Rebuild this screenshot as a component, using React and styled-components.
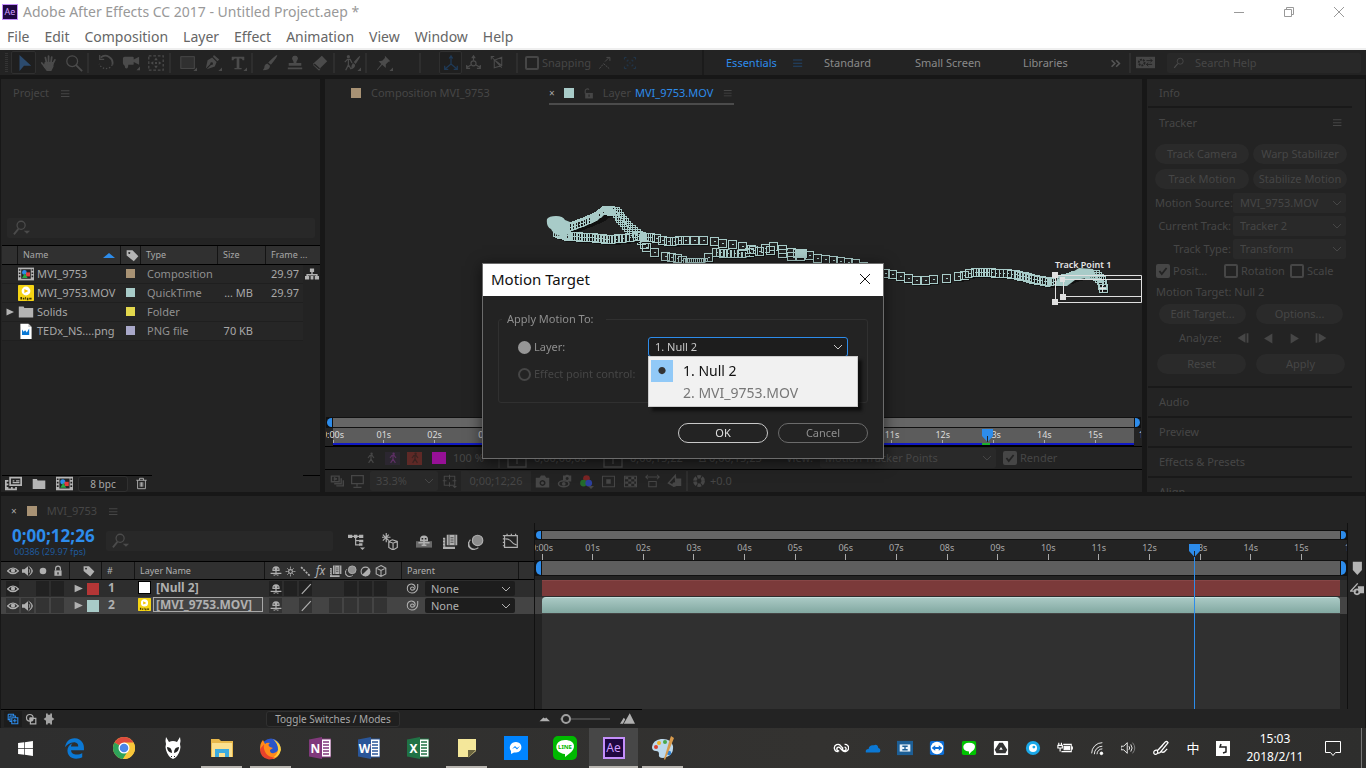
import React, { useState } from "react";
import styled, { createGlobalStyle, css } from "styled-components";
import { FaWindows, FaEdgeLegacy } from "react-icons/fa";

const GlobalStyle = createGlobalStyle`
  * { box-sizing: border-box; }
  body {
    margin: 0;
    background: #171717;
    color: #a8a8a8;
    font-family: "Noto Sans", "Noto Sans CJK TC", sans-serif;
    font-size: 11px;
    line-height: 16px;
    overflow: hidden;
  }
  button, input, select {
    font: inherit;
    color: inherit;
    margin: 0;
    padding: 0;
    border: none;
    background: none;
    outline: none;
  }
  svg { display: block; flex: none; }
`;

const FULL_SECONDS = 15.76;
const CURRENT_SECONDS = 12.87;

/* ---------- icons ---------- */

const line = { fill: "none", stroke: "currentColor", strokeWidth: 1.4 };

const icons = {
  arrow: <path d="M5 1l13 12h-8l-5 6z" />,
  hand: (
    <g stroke="currentColor" strokeWidth="2" strokeLinecap="round">
      <path d="M6 10h8v4l-2 4H8l-3-4z" />
      <path d="M2 10l4 5M6 4l1.5 7M9.5 2.500V11M13 3.500l-1 7.500M16.500 6.500L13 13" fill="none" />
    </g>
  ),
  zoom: (
    <g {...line}>
      <circle cx="8" cy="8" r="6" />
      <path d="M12 12l7 7" strokeWidth="2" />
    </g>
  ),
  rotate: (
    <g {...line}>
      <path d="M4 4a8 8 0 0 1 13 8" strokeWidth="2" />
      <path d="M17 12a8 8 0 0 1-14.500-1" strokeDasharray="1.500 2" />
      <path d="M3 1v5h5" />
    </g>
  ),
  camera: <path d="M3 3h9q1 0 1 1v2l6-3v9l-6-3v2q0 1-1 1H7q0 4-2 4t-2-3Q1 12 1 10V5q0-2 2-2zM20 14v4h-4z" />,
  anchor: (
    <g>
      <rect x="2" y="2" width="16" height="16" {...line} strokeDasharray="3 2" />
      <path d="M10 4l2 3H8zM10 16l2-3H8zM4 10l3-2v4zM16 10l-3-2v4zM9 9h2v2H9z" />
    </g>
  ),
  rect: (
    <g>
      <rect x="2" y="3" width="15" height="13" fill="#303030" stroke="currentColor" />
      <path d="M20 15v4h-4z" />
    </g>
  ),
  pen: (
    <g>
      <path d="M11 1l6 5-2 2-5-5zM9 4l5 5-2 5-9 3 5-5a1.500 1.500 0 1 0-1-1l-5 5 2-9z" />
      <path d="M20 15v4h-4z" />
    </g>
  ),
  type: <path d="M3 3h14v4h-2q0-2-2-2h-1.500v10.500H14V17H6v-1.500h2.500V5H7Q5 5 5 7H3zM20 15v4h-4z" />,
  brush: <path d="M18 1q1 1-7 11L8 9.500Q16 1 18 1zM7 10.500l3 2.500q0 5-8 5 2-2 2-5 1-2 3-2.500z" />,
  stamp: <path d="M10 2a3 3 0 0 1 2.500 5q-1 1-1 3H17v3H3v-3h5.500q0-2-1-3A3 3 0 0 1 10 2zM2 15h16v2H2z" />,
  eraser: <path d="M12 2l6 6-9 9-7-6zM4 10.500L2.500 12.500 9 18.500 10.500 16.500z" />,
  roto: (
    <g>
      <circle cx="6" cy="3" r="1.800" />
      <path d="M2 9l3-3h3l2 4M6 6v6l-3 6M6 12l3 5" {...line} />
      <path d="M19 2q1 1-5 9l-2-2q5-6 7-7zM11 10l2.500 2q0 4-5 5 1-1 1-4zM20 15v4h-4z" />
    </g>
  ),
  pin: <path d="M11 2l6 6-2 .500-3 3 0 4-4-3.500L2.500 18 2 17.500 7 11 4 8l4-.500 3-3zM20 15v4h-4z" />,
  axisLocal: (
    <g {...line}>
      <path d="M10 11V3M10 11l-7 6M10 11l7 6M8 5l2-3 2 3M3 13v4h4M17 13v4h-4" />
    </g>
  ),
  axisWorld: (
    <g {...line}>
      <circle cx="10" cy="11" r="3" />
      <path d="M10 8V3M8 5l2-3 2 3M7 13l-5 3M13 13l5 3M2 13v4h4M18 13v4h-4" />
    </g>
  ),
  axisView: (
    <g {...line}>
      <path d="M3 2l14 15M3 6V2h4M7 7l10-4v11l-10 3zM17 14L9 8" />
    </g>
  ),
  snapEdge: (
    <g {...line}>
      <path d="M2 18l6-7M8 11l8 7" strokeDasharray="3 1" />
      <path d="M10 8l5-5M12 2h5v5" />
    </g>
  ),
  snapBox: (
    <g {...line}>
      <path d="M2 5V2h3M15 2h3v3M18 15v3h-3M5 18H2v-3M6 8V6h2M12 6h2v2M14 12v2h-2M8 14H6v-2M9 10h2" />
    </g>
  ),
  burger: <path d="M3 5h13v1.500H3zM3 9.500h13v1.500H3zM3 14h13v1.500H3z" />,
  more: <path d="M4 5l5 5-5 5M11 5l5 5-5 5" {...line} strokeWidth="2.500" />,
  sync: (
    <g>
      <path d="M0 4h20v12H0z" />
      <circle cx="6" cy="10" r="3" fill="none" stroke="#232323" strokeWidth="2" strokeDasharray="2 1" />
      <path d="M11 8h6M15 6l2 2-2 2M17 12h-6M13 10l-2 2 2 2" fill="none" stroke="#232323" />
    </g>
  ),
  search: (
    <g {...line}>
      <circle cx="12" cy="7" r="5" />
      <path d="M8 11l-6 7" strokeWidth="2" />
    </g>
  ),
  searchDrop: (
    <g>
      <circle cx="9" cy="7" r="4.500" {...line} />
      <path d="M6 11l-5 6" {...line} strokeWidth="2" />
      <path d="M12 13h7l-3.500 3.500z" />
    </g>
  ),
  lock: (
    <g>
      <path d="M4 9h12v9H4z" />
      <path d="M6 9V6a4 4 0 0 1 8 0v3" {...line} strokeWidth="2" />
      <path d="M9 12h2v4H9z" fill="#232323" />
    </g>
  ),
  unlock: (
    <g>
      <path d="M4 9h14v10H4z" />
      <path d="M4 10V5a4 4 0 0 1 7-2" {...line} strokeWidth="2" />
      <path d="M10 12h2v4h-2z" fill="#232323" />
    </g>
  ),
  tag: <path fillRule="evenodd" d="M1 2h9l9 9-7 8-11-9zM5 4.500a1.500 1.500 0 1 0 .1 0z" />,
  comp: (
    <g>
      <path fill="#b4b4b4" d="M0 2h20v16H0z" />
      <path fill="#232323" d="M1 4h2v2H1zM1 8h2v2H1zM1 12h2v2H1zM17 4h2v2h-2zM17 8h2v2h-2zM17 12h2v2h-2zM4 4h12v12H4z" />
      <circle cx="8" cy="8" r="3" fill="#2d8ceb" />
      <path fill="#e23b3b" d="M10 8h5v5h-5z" />
      <path fill="#27a844" d="M8.500 9l3.500 6H5z" />
    </g>
  ),
  player: (
    <g>
      <rect width="20" height="20" rx="1" fill="#f5d414" />
      <circle cx="10" cy="7.500" r="5.500" fill="#fff" />
      <path d="M8 5l5 2.500L8 10z" fill="#f5c400" />
      <path d="M3 15h2v3H3zM6 16h2v2H6zM9 15h1v3H9zM11 16h2v3h-2zM14 16h3v2h-3z" fill="#403600" />
    </g>
  ),
  folder: <path fill="#b4b4b4" d="M1 3h6l1 2h11v12H1z" />,
  png: (
    <g>
      <path d="M3 1h10l4 4v15H3z" fill="#fff" />
      <path d="M5 15V8l2 3 2-2 2 3 3-5v8z" fill="#0a78d4" />
      <path d="M13 1v4h4z" fill="#c4c4c4" />
    </g>
  ),
  flow: <path d="M7 2h6v5h-2v3h7v3h2v5h-6v-5h2v-1H4v1h2v5H0v-5h2v-3h7V7H7zM8 13h4v5H8z" />,
  interpret: (
    <g>
      <path d="M6 3h13v9H6z" fill="none" stroke="#b4b4b4" strokeWidth="2" />
      <path d="M9 7h2M13 7h4M9 9h8" stroke="#b4b4b4" strokeWidth="1.500" />
      <path d="M0 6h4v2H2v2h2v2H2v2h2v2h3v-2h2v2h3v-2h2v4H0z" fill="#b4b4b4" />
    </g>
  ),
  trash: (
    <g {...line}>
      <path d="M2 5h16M7 5V2h6v3M4 5v13h12V5M8 8v7M10 8v7M12 8v7" />
    </g>
  ),
  person: (
    <g>
      <circle cx="11" cy="3" r="2" />
      <path d="M5 10l3-4h4l3 4M10 6v6l-4 6M10 12l4 6" {...line} strokeWidth="2" />
    </g>
  ),
  bracket: <path d="M1 1h18v18H1zM7 6h6M10 6v10" {...line} />,
  layers: (
    <g {...line}>
      <path d="M2 3h11v8H2z" strokeWidth="2" />
      <path d="M6 5l4 2-4 2z" fill="currentColor" />
      <path d="M16 6v8H6M19 9v8H9" strokeWidth="2" />
    </g>
  ),
  monitor: <path d="M4 4h13v9H4zM10 13v3M6 17h9" {...line} />,
  grid: (
    <g>
      <path d="M3 3h14v12H3zM10 1v6M10 11v6M1 9h5M14 9h5" {...line} />
      <path d="M14 16h6l-3 3z" />
    </g>
  ),
  snapshot: <path fillRule="evenodd" d="M1 5h5l2-3h5l2 3h4v13H1zM10 8a4 4 0 1 0 .1 0zM10 10a2 2 0 1 1-.1 0z" />,
  showSnap: (
    <g>
      <ellipse cx="9" cy="13" rx="7" ry="4" {...line} strokeWidth="2" />
      <circle cx="9" cy="13" r="2.500" />
      <path fillRule="evenodd" d="M8 2h3l1-1h3l1 1h3v8h-5l-3-2H8zM13.500 4a2 2 0 1 0 .1 0z" />
    </g>
  ),
  rgb: (
    <g>
      <circle cx="10" cy="6" r="4.500" fill="#7a2424" />
      <circle cx="6" cy="12" r="4.500" fill="#236b2c" />
      <circle cx="13" cy="12" r="4.500" fill="#2c3f9c" />
      <path d="M12 16h8l-4 4z" />
    </g>
  ),
  roi: (
    <g>
      <path d="M2 3h16v14H2z" {...line} />
      <path d="M7 7h6v6H7z" />
    </g>
  ),
  checker: (
    <g>
      <path d="M2 3h16v14H2z" {...line} />
      <path d="M3 4h4v3H3zM11 4h4v3h-4zM7 7h4v3H7zM15 7h3v3h-3zM3 10h4v3H3zM11 10h4v3h-4zM7 13h4v3H7zM15 13h3v3h-3z" />
    </g>
  ),
  aspect: <path d="M1 4h18M4 1L1 4l3 3M16 1l3 3-3 3M5 10h10v7H5z" {...line} />,
  shapes: (
    <g>
      <path d="M11 2L2 12l7 4 3-2z" {...line} strokeWidth="2" />
      <path d="M12 6h7v10h-8z" />
      <circle cx="10" cy="14" r="3" />
    </g>
  ),
  aperture: (
    <g {...line}>
      <circle cx="10" cy="10" r="6" strokeWidth="5" strokeDasharray="5 1.300" />
    </g>
  ),
  chevron: <path d="M2 6l8 8 8-8" {...line} strokeWidth="2" />,
  stepBack: <path d="M14 2v16L1 10zM16 2h3v16h-3z" />,
  playBack: <path d="M17 1v18L2 10z" />,
  play: <path d="M3 1v18l15-9z" />,
  stepFwd: <path d="M6 2v16l13-8zM1 2h3v16H1z" />,
  check: <path d="M4 10l4 5 8-10" {...line} strokeWidth="3" />,
  flowDrop: (
    <g>
      <path d="M4 4h11M9 4v10h5M9 9h4" {...line} />
      <path d="M0 2h5v4H0zM7 2h4v4H7zM13 2h5v4h-5zM13 8h5v3h-5zM13 12h4v3h-4zM14 17h6l-3 3z" />
    </g>
  ),
  draft3d: (
    <g {...line}>
      <path d="M12 8l6 2v7l-5 3-5-3v-7zM8 10l5 2 5-2M13 12v7" />
      <path d="M5 0v11M0 5h10M1 2l7 7M8 2l-7 7" />
    </g>
  ),
  shy: (
    <g>
      <path d="M10 2a6 6 0 0 1 6 6v2H4V8a6 6 0 0 1 6-6z" />
      <path d="M1 13h18v2H1zM9 8h2v9H9zM6 16h2v2H6zM12 16h2v2h-2z" />
      <path d="M6 6h2v2H6zM12 6h2v2h-2z" fill="#303030" />
    </g>
  ),
  shyBig: (
    <g>
      <path d="M0 9h20v8H0z" opacity=".5" />
      <path d="M10 2a5 5 0 0 1 5 5v2H5V7a5 5 0 0 1 5-5z" />
      <path d="M3 11h14M10 5v10M7 14h2M11 14h2" {...line} strokeWidth="2" />
      <path d="M7 5h2v2H7zM11 5h2v2h-2z" fill="#232323" />
    </g>
  ),
  film: (
    <g>
      <path d="M5 1h14v14H5zM0 5h3v12h13v3H0z" />
      <path d="M8 1v14M16 1v14M10 5h4M10 8h4M10 11h4M0 8h2M0 12h2M0 16h2" stroke="#303030" />
    </g>
  ),
  blur: (
    <g>
      <circle cx="12" cy="8" r="6.500" opacity=".75" />
      <circle cx="12" cy="8" r="6.500" {...line} />
      <path d="M3 7a6.500 6.500 0 0 0 10 10M1 10a6.500 6.500 0 0 0 8 9" {...line} />
    </g>
  ),
  graph: (
    <g {...line}>
      <path d="M3 3h15v14H3zM1 3h2M1 7h2M1 11h2M1 15h2M6 1v2M11 1v2M16 1v2M4 7q5 0 7 3t6 4" />
    </g>
  ),
  eye: (
    <g>
      <path d="M1 10q9-10 18 0-9 9-18 0z" {...line} strokeWidth="2" />
      <circle cx="10" cy="9.500" r="3.500" />
    </g>
  ),
  speaker: (
    <g>
      <path d="M0 7h4l6-5v16l-6-5H0z" />
      <path d="M12 7q2 3 0 6M14 4q5 6 0 12M11 2q13 8 0 16" {...line} />
    </g>
  ),
  dot: <circle cx="10" cy="10" r="5.500" />,
  sun: (
    <g {...line}>
      <circle cx="10" cy="10" r="3.500" strokeWidth="2" />
      <path d="M10 1v4M10 15v4M1 10h4M15 10h4M4 4l3 3M13 13l3 3M4 16l3-3M13 7l3-3" />
    </g>
  ),
  quality: <path d="M2 2l16 16" {...line} strokeWidth="3" strokeDasharray="4 2" />,
  slash: <path d="M3 18L18 2" {...line} strokeWidth="2" />,
  adjust: (
    <g>
      <circle cx="10" cy="10" r="8" {...line} strokeWidth="2" />
      <path d="M16 4a8 8 0 0 1-12 12z" />
    </g>
  ),
  cube: <path d="M10 1l8 4v10l-8 4-8-4V5zM2 5l8 4 8-4M10 9v10" {...line} strokeWidth="1.800" />,
  whip: (
    <path d="M12 10a2.500 2.500 0 1 0-3 2.500 5 5 0 0 0 5-5 6 6 0 0 0-6-4.500 7 7 0 0 0-6 7 7 7 0 0 0 7 7 9 9 0 0 0 9-9V3" {...line} strokeWidth="1.600" />
  ),
  tri: <path d="M3 3l15 7-15 7z" />,
  marker: <path d="M4 1h13v12l-6.500 7L4 13z" />,
  compBtn: (
    <g>
      <path d="M11 2L1 13h8" {...line} strokeWidth="2" />
      <path d="M11 6h9v10h-7z" />
      <circle cx="10" cy="14" r="3.500" {...line} strokeWidth="2.500" />
    </g>
  ),
  stack: (
    <g {...line}>
      <path d="M2 2h9v3M2 2v9h3M5 5h9v3M5 5v9h3M8 8h10v10H8zM13 10v6M10 13h6" strokeWidth="1.800" />
    </g>
  ),
  modes: (
    <g {...line}>
      <circle cx="8" cy="8" r="5.500" strokeWidth="2" />
      <path d="M9 9h9v9H9z" strokeWidth="2" />
      <path d="M8 8h5v5H8z" fill="currentColor" />
    </g>
  ),
  inout: <path d="M5 1h3v2h4V1h3v6l4 3-4 3v6h-3v-2H8v2H5v-6l-4-3 4-3z" opacity=".9" />,
  hillSmall: <path d="M1 15l7-7 3 2 2-2 7 7z" />,
  hillBig: <path d="M0 17l5-8 2 2-3 6zM5 17L13 3l7 14z" />,
};

function Icon({ name, size = 16, color, label }) {
  return (
    <svg width={size} height={size} viewBox="0 0 20 20" fill="currentColor" color={color} aria-label={label}>
      {icons[name]}
    </svg>
  );
}

/* ---------- shared parts ---------- */

const Swatch = styled.span`
  display: inline-block;
  flex: none;
  width: ${(p) => p.$size || 10}px;
  height: ${(p) => p.$size || 10}px;
  background: ${(p) => p.$color};
`;

const Panel = styled.section`
  background: #232323;
  display: flex;
  flex-direction: column;
  min-width: 0;
  min-height: 0;
  overflow: hidden;
`;

const TabBar = styled.div`
  height: 28px;
  flex: none;
  display: flex;
  align-items: center;
  padding-left: 12px;
  gap: 10px;
  color: #464646;
  button { display: flex; align-items: center; }
`;

const Pill = styled.button`
  height: 20px;
  border-radius: 10px;
  background: #2a2a2a;
  color: #464646;
  white-space: nowrap;
`;

const SelectWrap = styled.span`
  display: grid;
  align-items: center;
  position: relative;
  flex: none;
  height: 20px;
  width: ${(p) => (p.$w ? p.$w + "px" : "auto")};
  border-radius: 2px;
  background: ${(p) => p.$bg || "#292929"};
  color: ${(p) => p.$color || "#464646"};
  ${(p) => p.$focus && css`border: 1px solid #2d8ceb; border-radius: 3px;`}
  select {
    grid-area: 1 / 1;
    appearance: none;
    width: 100%;
    padding-left: ${(p) => p.$pad || 7}px;
  }
  > svg {
    grid-area: 1 / 1;
    justify-self: end;
    margin-right: 4px;
    pointer-events: none;
  }
`;

function Select({ label, options, children, ...rest }) {
  return (
    <SelectWrap {...rest}>
      <select aria-label={label}>
        {options.map((o) => (
          <option key={o}>{o}</option>
        ))}
      </select>
      <Icon name="chevron" size={10} />
      {children}
    </SelectWrap>
  );
}

const CheckLabel = styled.label`
  display: flex;
  align-items: center;
  gap: 3px;
  color: #464646;
  > span { display: grid; color: #232323; }
  input {
    grid-area: 1 / 1;
    appearance: none;
    width: 14px;
    height: 14px;
    border: 2px solid #464646;
    border-radius: 2px;
  }
  input:checked { background: #464646; }
  svg { grid-area: 1 / 1; align-self: center; justify-self: center; pointer-events: none; }
`;

function Check({ children, checked }) {
  const [on, setOn] = useState(!!checked);
  return (
    <CheckLabel>
      <span>
        <input type="checkbox" checked={on} onChange={() => setOn(!on)} />
        {on && <Icon name="check" size={12} />}
      </span>
      {children}
    </CheckLabel>
  );
}

/* ---------- window chrome ---------- */

const Window = styled.div`
  height: 100vh;
  min-height: 700px;
  display: flex;
  flex-direction: column;
`;

const TitleBar = styled.header`
  height: 24px;
  flex: none;
  background: #fff;
  color: #999;
  font-size: 14px;
  display: flex;
  align-items: center;
  padding-left: 2px;
  gap: 5px;
  h1 { margin: 0; font: inherit; flex: 1; }
`;

const AeBadge = styled.span`
  width: ${(p) => p.$size}px;
  height: ${(p) => p.$size}px;
  flex: none;
  display: grid;
  place-items: center;
  background: #1f0740;
  border: ${(p) => (p.$size > 18 ? 2 : 1)}px solid #c48ffb;
  color: #cf9cff;
  font-size: ${(p) => (p.$size > 18 ? 12 : 9)}px;
  line-height: 12px;
`;

const WinButtons = styled.div`
  display: flex;
  padding-right: 2px;
  button { width: 50px; height: 22px; display: grid; place-items: center; }
`;

const MenuBar = styled.nav`
  height: 26px;
  flex: none;
  background: #fff;
  border-bottom: 2px solid #efefef;
  color: #666;
  display: flex;
  align-items: center;
  padding: 2px 0 0 7px;
  gap: 15px;
  font-size: 14px;
`;

function WindowChrome() {
  return (
    <>
      <TitleBar>
        <AeBadge $size={16}>Ae</AeBadge>
        <h1>Adobe After Effects CC 2017 - Untitled Project.aep *</h1>
        <WinButtons>
          <button aria-label="Minimize">
            <svg width="10" height="10"><path d="M0 5.500h10" stroke="#999" /></svg>
          </button>
          <button aria-label="Restore">
            <svg width="10" height="10" fill="none" stroke="#999"><path d="M.5 2.500h7v7h-7zM2.500 2.500v-2h7v7h-2" /></svg>
          </button>
          <button aria-label="Close">
            <svg width="10" height="10" stroke="#999"><path d="M0 0l10 10M10 0L0 10" /></svg>
          </button>
        </WinButtons>
      </TitleBar>
      <MenuBar>
        {["File", "Edit", "Composition", "Layer", "Effect", "Animation", "View", "Window", "Help"].map((m) => (
          <button key={m}>{m}</button>
        ))}
      </MenuBar>
    </>
  );
}

/* ---------- toolbar ---------- */

const ToolBar = styled.div`
  height: 25px;
  flex: none;
  background: #232323;
  color: #4b4b4b;
  display: flex;
  align-items: center;
  padding-right: 5px;
  margin-bottom: 4px;
`;

const Grip = styled.span`
  width: 3px;
  height: 20px;
  margin: 0 3px 0 5px;
  background: repeating-linear-gradient(#343434 0 1px, #232323 1px 2px);
`;

const Tool = styled.button`
  width: ${(p) => p.$w || 25}px;
  height: 23px;
  flex: none;
  display: grid;
  place-items: center;
  border-radius: 2px;
  color: ${(p) => p.$color || "inherit"};
  ${(p) => p.$active && css`border: 1px solid #2f2f2f; background: #1f1f1f;`}
`;

const Sep = styled.span`
  width: 2px;
  height: 20px;
  flex: none;
  background: #2e2e2e;
  margin: ${(p) => p.$margin || "0 4px 0 1px"};
`;

const Workspaces = styled.div`
  margin-left: auto;
  height: 25px;
  border-left: 2px solid #1b1b1b;
  padding-left: 22px;
  display: flex;
  align-items: center;
`;

const WorkspaceButton = styled.button`
  width: ${(p) => p.$w}px;
  padding-top: 1px;
  text-align: left;
  white-space: nowrap;
  color: ${(p) => (p.$active ? "#2d8ceb" : "#8a8a8a")};
`;

const SearchBox = styled.label`
  height: 20px;
  flex: none;
  width: ${(p) => (p.$w ? p.$w + "px" : "auto")};
  margin: ${(p) => p.$margin || "0"};
  display: flex;
  align-items: center;
  gap: 10px;
  padding-left: 6px;
  border-radius: 2px;
  background: #282828;
  color: #4b4b4b;
  input { flex: 1; min-width: 0; }
  input::placeholder { color: #464646; opacity: 1; }
`;

const toolGroups = [
  ["arrow", "hand", "zoom"],
  ["rotate", "camera", "anchor"],
  ["rect", "pen", "type"],
  ["brush", "stamp", "eraser"],
  ["roto"],
  ["pin"],
];

function Tools() {
  return (
    <ToolBar>
      <Grip />
      {toolGroups.map((group, i) => (
        <React.Fragment key={i}>
          {i > 0 && <Sep />}
          {group.map((name) => (
            <Tool key={name} aria-label={name} $active={name === "arrow"} $color={name === "arrow" && "#2c4b6e"}>
              <Icon name={name} size={18} />
            </Tool>
          ))}
        </React.Fragment>
      ))}
      <Sep $margin="0 18px 0 23px" />
      <Tool $w={23} $active $color="#1f3a57" aria-label="Local axis"><Icon name="axisLocal" size={18} /></Tool>
      <Tool $w={23} aria-label="World axis"><Icon name="axisWorld" size={17} /></Tool>
      <Tool $w={23} aria-label="View axis"><Icon name="axisView" size={15} /></Tool>
      <Sep $margin="0 7px 0 8px" />
      <Check>Snapping</Check>
      <Tool $w={28} aria-label="Snap edges"><Icon name="snapEdge" size={14} /></Tool>
      <Tool $w={22} $color="#22384f" aria-label="Snap box"><Icon name="snapBox" size={14} /></Tool>
      <Workspaces>
        <WorkspaceButton $w={65} $active>Essentials</WorkspaceButton>
        <WorkspaceButton $w={33} aria-label="Workspace menu"><Icon name="burger" size={14} color="#22456b" /></WorkspaceButton>
        <WorkspaceButton $w={91}>Standard</WorkspaceButton>
        <WorkspaceButton $w={108}>Small Screen</WorkspaceButton>
        <WorkspaceButton $w={86}>Libraries</WorkspaceButton>
        <WorkspaceButton $w={20} aria-label="More workspaces"><Icon name="more" size={13} color="#555" /></WorkspaceButton>
        <Sep $margin="0 5px 0 0" />
        <Icon name="sync" size={19} color="#464646" />
        <SearchBox $w={194} $margin="0 0 0 12px">
          <Icon name="search" size={12} />
          <input placeholder="Search Help" aria-label="Search Help" />
        </SearchBox>
      </Workspaces>
    </ToolBar>
  );
}

/* ---------- project panel ---------- */

const Workspace = styled.main`
  flex: 1;
  min-height: 0;
  display: grid;
  grid-template-columns: 319px minmax(0, 1fr) 218px;
  grid-template-rows: minmax(0, 1fr);
  gap: 5px;
  padding: 0 1px;
`;

const ProjectSpace = styled.div`
  height: 111px;
  flex: none;
`;

const ProjectTable = styled.table`
  margin: 7px 0 0 1px;
  border-collapse: collapse;
  table-layout: fixed;
  width: 318px;
  th {
    height: 19px;
    background: #303030;
    border-top: 1px solid #000;
    border-bottom: 1px solid #000;
    padding: 0 0 0 6px;
    font-size: 9px;
    font-weight: normal;
    line-height: 12px;
    text-align: left;
    white-space: nowrap;
    box-shadow: inset 1px 0 #141414;
  }
  th:first-child { box-shadow: none; }
  td {
    height: 19px;
    padding: 0;
    white-space: nowrap;
    border-bottom: 1px solid #1f1f1f;
    background: #262626;
  }
  td:last-child { background: none; border: none; }
  td > svg { margin: auto; }
`;

const NameHead = styled.span`
  display: flex;
  justify-content: space-between;
  align-items: center;
  padding-right: 5px;
`;

const NameCell = styled.span`
  display: flex;
  align-items: center;
  gap: 3px;
  padding-left: 1px;
`;

const TypeText = styled.span`
  padding-left: 7px;
  color: #909090;
`;

const Right = styled.span`
  display: block;
  text-align: right;
  padding-right: ${(p) => p.$pad}px;
`;

const ProjectFooter = styled.div`
  margin: auto 0 0 1px;
  height: 17px;
  flex: none;
  display: flex;
  align-items: center;
  gap: 10px;
  padding-left: 3px;
  color: #b4b4b4;
  background: linear-gradient(#000, #000) 0 0 / 150px 1px no-repeat, linear-gradient(#000, #000) 100% 0 / 17px 1px no-repeat;
`;

const BpcButton = styled.button`
  width: 50px;
  height: 16px;
  margin: 1px -3px 0 -5px;
  border: 1px solid #303030;
  border-radius: 3px;
  background: #1f1f1f;
  font-size: 10px;
  line-height: 12px;
  color: #a8a8a8;
`;

const files = [
  { name: "MVI_9753", icon: "comp", color: "#a89274", type: "Composition", size: "", rate: "29.97", flow: true },
  { name: "MVI_9753.MOV", icon: "player", color: "#a8cbc8", type: "QuickTime", size: "... MB", rate: "29.97" },
  { name: "Solids", icon: "folder", color: "#e3d84d", type: "Folder", size: "", rate: "", folder: true },
  { name: "TEDx_NS....png", icon: "png", color: "#a9a8c9", type: "PNG file", size: "70 KB", rate: "" },
];

function Project() {
  return (
    <Panel>
      <TabBar>
        Project
        <button aria-label="Project menu"><Icon name="burger" size={13} /></button>
      </TabBar>
      <ProjectSpace />
      <SearchBox $margin="0 5px 0 6px">
        <Icon name="searchDrop" size={18} />
        <input aria-label="Search project" />
      </SearchBox>
      <ProjectTable>
        <colgroup>
          {[15, 103, 20, 77, 48, 38, 17].map((w, i) => (
            <col key={i} width={w} />
          ))}
        </colgroup>
        <thead>
          <tr>
            <th />
            <th>
              <NameHead>
                Name
                <svg width="12" height="5" fill="#2d8ceb"><path d="M6 0l6 5H0z" /></svg>
              </NameHead>
            </th>
            <th><Icon name="tag" size={13} color="#b4b4b4" label="Label" /></th>
            <th>Type</th>
            <th>Size</th>
            <th colSpan={2}>Frame ...</th>
          </tr>
        </thead>
        <tbody>
          {files.map((f) => (
            <tr key={f.name}>
              <td>{f.folder && <Icon name="tri" size={10} color="#b4b4b4" />}</td>
              <td>
                <NameCell>
                  <Icon name={f.icon} size={16} />
                  {f.name}
                </NameCell>
              </td>
              <td align="center"><Swatch $size={9} $color={f.color} /></td>
              <td><TypeText>{f.type}</TypeText></td>
              <td><Right $pad={12}>{f.size}</Right></td>
              <td><Right $pad={4}>{f.rate}</Right></td>
              <td>{f.flow && <Icon name="flow" size={14} color="#b4b4b4" />}</td>
            </tr>
          ))}
        </tbody>
      </ProjectTable>
      <ProjectFooter>
        <Icon name="interpret" size={17} />
        <Icon name="folder" size={14} />
        <Icon name="comp" size={17} />
        <BpcButton>8 bpc</BpcButton>
        <Icon name="trash" size={13} />
      </ProjectFooter>
    </Panel>
  );
}

/* ---------- time ruler ---------- */

const RulerClip = styled.div`
  height: ${(p) => p.$h}px;
  flex: none;
  overflow: hidden;
  padding: 0 7px;
  color: ${(p) => (p.$lit ? "#ddd" : "#a8a8a8")};
  background: ${(p) => (p.$lit ? "linear-gradient(90deg, #232323 7px, #5c5c5c 7px, #5c5c5c calc(100% - 7px), #232323 0)" : "none")};
  ul {
    width: 100%;
    height: 100%;
    margin: 0 0 0 ${-50 / FULL_SECONDS}%;
    padding: 0;
    display: flex;
    list-style: none;
    font-size: 9px;
    line-height: ${(p) => (p.$lit ? 13 : 16)}px;
  }
  li {
    flex: 0 0 ${100 / FULL_SECONDS}%;
    text-align: center;
    background: linear-gradient(#aaa, #aaa) 50% 100% / 1px ${(p) => (p.$lit ? 3 : 6)}px no-repeat;
  }
`;

function Ruler({ h, lit }) {
  return (
    <RulerClip $h={h} $lit={lit}>
      <ul>
        {Array.from({ length: 17 }, (_, i) => (
          <li key={i}>{i === 0 ? "0:00s" : String(i).padStart(2, "0") + "s"}</li>
        ))}
      </ul>
    </RulerClip>
  );
}

const RangeBar = styled.div`
  height: ${(p) => p.$h}px;
  flex: none;
  display: flex;
  background: #111;
  &::before, &::after {
    content: "";
    width: 5px;
    margin: 1px;
    background: #2d8ceb;
    border-radius: 5px 0 0 5px;
  }
  &::after { border-radius: 0 5px 5px 0; }
  span { flex: 1; background: #666; border: solid #111; border-width: 1px 0; }
`;

const Timed = styled.div`
  position: relative;
  display: flex;
  flex-direction: column;
  margin: ${(p) => p.$margin || "0"};
`;

/* cursor drawn over the ruler and tracks */
const Playhead = styled.div`
  position: absolute;
  top: ${(p) => p.$top}px;
  bottom: 0;
  width: 1px;
  background: ${(p) => (p.$line ? "#2d8ceb" : "none")};
  svg { margin-left: -5px; }
`;

function Cursor({ top, line }) {
  const left = `calc(7px + (100% - 14px) * ${CURRENT_SECONDS / FULL_SECONDS})`;
  return (
    <Playhead $top={top} $line={line} style={{ left }}>
      <svg width="11" height="13"><path d="M0 0h11v7l-5.500 6L0 7z" fill="#2d8ceb" /><path d="M5 7h1v6H5z" fill="#222" /></svg>
    </Playhead>
  );
}

/* ---------- layer viewer ---------- */

const ViewerTabs = styled(TabBar)`
  padding-left: 26px;
  white-space: nowrap;
`;

const ActiveTab = styled.div`
  margin-left: 49px;
  height: 24px;
  align-self: flex-start;
  padding-top: 2px;
  margin-top: 2px;
  border-bottom: 2px solid #4b4b4b;
  display: flex;
  align-items: center;
  gap: 9px;
  b { color: #2d8ceb; font-weight: normal; margin-left: -5px; }
`;

const CloseX = styled.button`
  color: #a8a8a8;
  font-size: 10px;
  line-height: 12px;
`;

const Canvas = styled.svg`
  flex: 1;
  width: 100%;
  min-height: 0;
`;

const ViewRow = styled.div`
  height: 23px;
  flex: none;
  border-top: 1px solid #000;
  display: flex;
  align-items: center;
  white-space: nowrap;
  color: #464646;
  overflow: hidden;
  padding-left: ${(p) => p.$pad}px;
  gap: ${(p) => p.$gap}px;
`;

const ViewIcons = styled.div`
  display: flex;
  gap: 7px;
`;

const IconBox = styled.span`
  width: 15px;
  height: 13px;
  display: grid;
  place-items: center;
  background: ${(p) => p.$bg};
`;

const MaskColor = styled(Swatch)`
  height: 12px;
  margin-left: 3px;
`;

const TimeButton = styled.button`
  width: ${(p) => p.$w}px;
  height: 20px;
  background: ${(p) => p.$bg || "none"};
  text-align: ${(p) => (p.$bg ? "center" : "left")};
`;

const BlueLine = styled.div`
  height: 3px;
  margin: 0 7px;
  border: solid #000;
  border-width: 0 0 1px;
  background: linear-gradient(90deg, #1018c4 81%, #18b030 81%, #18b030 82%, #1018c4 82%);
`;

// motion paths: [x, y] corners with the number of samples on the way to the next one
const paths = [
  [[232, 117, 5], [245, 120, 6], [262, 114, 6], [275, 108, 5], [281, 103, 5], [290, 104, 4], [297, 113, 3], [303, 120, 3], [311, 126, 3], [316, 133, 2], [321, 140, 1], [329, 145, 1], [340, 149, 2], [352, 151, 2], [362, 155, 8], [378, 155, 1], [383, 150, 1], [391, 145, 4], [405, 146, 4], [420, 146, 2], [428, 143, 1], [440, 141, 1], [448, 139, 1], [457, 142, 1], [466, 145, 2], [477, 146, 1]],
  [[232, 125, 5], [243, 129, 9], [265, 130, 6], [283, 132, 5], [300, 131, 3], [312, 129, 6], [325, 130, 3], [343, 134, 3], [360, 133, 2], [378, 133, 1], [389, 134, 1], [397, 136, 1], [407, 137, 1], [417, 139, 2], [434, 144, 1], [445, 143, 1], [457, 146, 1], [466, 149, 2], [484, 148, 1], [492, 151, 2], [508, 153, 3], [530, 156, 4], [560, 166, 1], [567, 167, 3], [591, 173, 2], [608, 172, 2], [633, 169, 3], [650, 165, 5], [662, 165, 7], [690, 167, 5], [705, 171, 7], [724, 175, 7], [738, 172, 8], [757, 166, 4], [770, 167, 3], [776, 173, 3], [778, 181, 1]],
];

function samplePath(corners) {
  const out = [];
  corners.forEach(([x, y, n], i) => {
    const [nx, ny] = corners[i + 1] || [x, y];
    for (let k = 0; k < n; k++) {
      out.push([Math.round(x + ((nx - x) * k) / n), Math.round(y + ((ny - y) * k) / n)]);
    }
  });
  return out;
}

function MotionPath() {
  const teal = "#a8cbc8";
  return (
    <Canvas>
      {paths.map((corners, i) => (
        <g key={i}>
          {samplePath(corners).map(([x, y], k) => (
            <g key={k}>
              <path d={`M${x - 2.5} ${y + 5.5}h8v-8`} stroke="#111" fill="none" />
              <rect x={x - 3.5} y={y - 3.5} width="8" height="8" stroke={teal} fill="none" />
              <rect x={x} y={y} width="2" height="1" fill={teal} />
            </g>
          ))}
        </g>
      ))}
      <path fill={teal} d="M222 112q2-3 9-3 7 0 9 4l5 2v12l-10 2q-7-2-9-7-5-2-4-10zM471 142h10v9h-10zM732 172l14-6 8-5 14 1 4 8-10 1-12 2-8 6h-12z" />
      <path fill="none" stroke="#e0e0e0" d="M816.500 168.500h-86v27h86zM816.500 172.500h-78v17h78z" />
      <path fill="#e0e0e0" d="M727 165h6v6h-6zM727 192h6v6h-6zM735 187h6v6h-6zM735 170h5v5h-5zM774 181h7v1h-7zM777 178h1v7h-1z" />
      <text x="730" y="161" fill="#e6e6e6" fontSize="9" fontWeight="600">Track Point 1</text>
    </Canvas>
  );
}

function Viewer() {
  return (
    <Panel>
      <ViewerTabs>
        <Swatch $color="#a89274" />
        <span>Composition MVI_9753</span>
        <ActiveTab>
          <CloseX aria-label="Close tab">×</CloseX>
          <Swatch $color="#a8cbc8" />
          <Icon name="unlock" size={11} />
          Layer
          <b>MVI_9753.MOV</b>
          <Icon name="burger" size={12} />
        </ActiveTab>
      </ViewerTabs>
      <MotionPath />
      <Timed $margin="0 1px">
        <RangeBar $h={11}><span /></RangeBar>
        <Ruler h={15} lit />
        <BlueLine />
        <Cursor top={12} />
      </Timed>
      <ViewRow $pad={38} $gap={7}>
        <IconBox><Icon name="person" size={12} /></IconBox>
        <IconBox $bg="#2b2630"><Icon name="person" size={12} color="#5d2f63" /></IconBox>
        <IconBox $bg="#5e2926"><Icon name="person" size={12} color="#3a2320" /></IconBox>
        <MaskColor $size={14} $color="#961096" />
        <TimeButton $w={38}>100 %</TimeButton>
        <Sep $margin="0" />
        <Icon name="bracket" size={20} />
        <TimeButton $w={62}>0;00;00;00</TimeButton>
        <Icon name="bracket" size={20} />
        <TimeButton $w={62}>0;00;15;22</TimeButton>
        <TimeButton $w={80}>Δ 0;00;15;23</TimeButton>
        <span>View:</span>
        <Select label="View" options={["Motion Tracker Points"]} $w={176} $pad={5} />
        <Check checked>Render</Check>
      </ViewRow>
      <ViewRow $pad={5} $gap={4}>
        <Icon name="layers" size={14} />
        <Icon name="monitor" size={18} />
        <Select label="Zoom" options={["33.3%"]} $w={68} $pad={6} />
        <Icon name="grid" size={15} />
        <TimeButton $w={70} $bg="#292929">0;00;12;26</TimeButton>
        <ViewIcons>
          {["snapshot", "showSnap", "rgb", "roi", "checker", "aspect", "shapes"].map((n) => (
            <Icon key={n} name={n} size={15} />
          ))}
        </ViewIcons>
        <Sep $margin="0" />
        <Icon name="aperture" size={14} />
        <span>+0.0</span>
      </ViewRow>
    </Panel>
  );
}

/* ---------- right column ---------- */

const SideTitle = styled.div`
  height: ${(p) => p.$h || 30}px;
  flex: none;
  margin: 0 13px 0 1px;
  padding: 0 8px 0 11px;
  display: flex;
  align-items: center;
  justify-content: space-between;
  color: #464646;
  border-bottom: ${(p) => (p.$open ? 0 : 2)}px solid #191919;
`;

const TrackerForm = styled.div`
  flex: none;
  display: flex;
  flex-direction: column;
  margin: 0 13px 0 1px;
  padding: 7px 5px 12px 7px;
  border-bottom: 2px solid #191919;
  color: #464646;
`;

const ButtonPair = styled.div`
  display: grid;
  grid-template-columns: 1fr 1fr;
  gap: ${(p) => (p.$inset ? 10 : 4)}px;
  margin: ${(p) => p.$margin || "0 0 5px"};
`;

const Field = styled.label`
  display: grid;
  grid-template-columns: 76px 113px;
  gap: 2px;
  align-items: center;
  text-align: right;
  margin: -1px 0 4px;
  white-space: nowrap;
`;

const CheckRow = styled.div`
  display: grid;
  grid-template-columns: 68px 66px 1fr;
  padding-left: 1px;
  margin: 0 0 5px;
`;

const Target = styled.span`
  padding-left: 1px;
`;

const Analyze = styled.div`
  display: flex;
  align-items: center;
  height: 20px;
  margin: 4px 0 6px;
  padding: 0 20px 0 24px;
  justify-content: space-between;
  color: #464646;
  button { height: 12px; }
`;

function Side() {
  return (
    <Panel as="aside">
      <SideTitle $h={29}>Info</SideTitle>
      <SideTitle $h={29} $open>
        Tracker
        <Icon name="burger" size={13} />
      </SideTitle>
      <TrackerForm>
        <ButtonPair>
          <Pill>Track Camera</Pill>
          <Pill>Warp Stabilizer</Pill>
        </ButtonPair>
        <ButtonPair>
          <Pill>Track Motion</Pill>
          <Pill>Stabilize Motion</Pill>
        </ButtonPair>
        <Field>Motion Source:<Select label="Motion Source" options={["MVI_9753.MOV"]} /></Field>
        <Field>Current Track:<Select label="Current Track" options={["Tracker 2"]} /></Field>
        <Field>Track Type:<Select label="Track Type" options={["Transform"]} /></Field>
        <CheckRow>
          <Check checked>Posit...</Check>
          <Check>Rotation</Check>
          <Check>Scale</Check>
        </CheckRow>
        <Target>Motion Target: Null 2</Target>
        <ButtonPair $inset $margin="4px 4px 0">
          <Pill>Edit Target...</Pill>
          <Pill>Options...</Pill>
        </ButtonPair>
        <Analyze>
          Analyze:
          <button aria-label="Analyze 1 frame backward"><Icon name="stepBack" size={12} /></button>
          <button aria-label="Analyze backward"><Icon name="playBack" size={11} /></button>
          <button aria-label="Analyze forward"><Icon name="play" size={11} /></button>
          <button aria-label="Analyze 1 frame forward"><Icon name="stepFwd" size={12} /></button>
        </Analyze>
        <ButtonPair $inset $margin="0 2px">
          <Pill>Reset</Pill>
          <Pill>Apply</Pill>
        </ButtonPair>
      </TrackerForm>
      <SideTitle>Audio</SideTitle>
      <SideTitle>Preview</SideTitle>
      <SideTitle>Effects &amp; Presets</SideTitle>
      <SideTitle>Align</SideTitle>
    </Panel>
  );
}

/* ---------- timeline ---------- */

const TimelinePanel = styled(Panel)`
  flex: none;
  margin: 4px 1px 0;
`;

const TimelineTabs = styled(TabBar)`
  height: 27px;
  padding: 3px 0 0 10px;
`;

const TimelineBody = styled.div`
  height: 186px;
  display: grid;
  grid-template-columns: 533px minmax(0, 1fr) 18px;
`;

const TimelineHead = styled.div`
  height: 38px;
  display: flex;
  align-items: flex-start;
  padding: 3px 0 0 11px;
`;

const Timecode = styled.div`
  width: 94px;
  flex: none;
  color: #2d8ceb;
  strong { display: block; font-size: 17px; line-height: 19px; }
  small { display: block; padding-left: 2px; font-size: 9px; line-height: 13px; color: #1f5a9c; white-space: nowrap; }
`;

const HeadIcons = styled.div`
  display: flex;
  align-items: center;
  margin: 7px 0 0 15px;
  color: #b0b0b0;
`;

const HeadIcon = styled.button`
  width: ${(p) => p.$w}px;
  display: grid;
  place-items: center;
`;

const LayerGrid = styled.div`
  display: grid;
  grid-template-columns: 68px 32px 33px 130px 137px 117px 1fr;
  align-items: stretch;
  height: 17px;
  background: ${(p) => (p.$selected ? "#444" : "#2d2d2d")};
  color: #b0b0b0;
  > * { display: flex; align-items: center; min-width: 0; }
`;

const LayerHeader = styled(LayerGrid)`
  height: 19px;
  background: #303030;
  border: solid #000;
  border-width: 1px 0;
  font-size: 9px;
  > * + * { box-shadow: inset 1px 0 #141414; }
`;

const Cells = styled.span`
  padding-left: 4px;
  padding-bottom: ${(p) => (p.$head ? 0 : 1)}px;
`;

const Cell = styled.span`
  width: 15px;
  height: 100%;
  display: grid;
  place-items: center;
  border: solid transparent;
  border-width: 1px 1px 0;
  background: ${(p) => (p.$box ? "rgba(0, 0, 0, 0.25)" : "none")};
  background-clip: padding-box;
`;

const Pad = styled.span`
  padding-left: ${(p) => p.$left}px;
  gap: ${(p) => p.$gap || 0}px;
`;

const LayerName = styled.span`
  font-size: 12px;
  font-weight: bold;
  padding: 0 1px 2px 4px;
  gap: 2px;
  > span:last-child {
    flex: 1;
    white-space: nowrap;
    line-height: 13px;
    padding-left: 2px;
    border: 1px solid ${(p) => (p.$selected ? "#a8a8a8" : "transparent")};
  }
`;

const NullBox = styled(Swatch)`
  border: 1px solid #000;
`;

const ParentSelect = styled.span`
  width: 90px;
  > span { height: 15px; }
`;

const Fx = styled.i`
  font-size: 12px;
  line-height: 12px;
`;

const layers = [
  { n: 1, name: "[Null 2]", color: "#b53636", boxes: [true, false, false, false, true, true, true] },
  { n: 2, name: "[MVI_9753.MOV]", color: "#a8cbc8", boxes: [false, false, false, true, true, true, true], audio: true, selected: true },
];

function LayerRow({ layer }) {
  return (
    <LayerGrid $selected={layer.selected}>
      <Cells>
        <Cell $box><Icon name="eye" size={12} /></Cell>
        <Cell $box={layer.audio}>{layer.audio && <Icon name="speaker" size={12} />}</Cell>
        <Cell $box />
        <Cell $box />
      </Cells>
      <Pad $left={4} $gap={3}>
        <Icon name="tri" size={11} />
        <Swatch $size={12} $color={layer.color} />
      </Pad>
      <LayerName><span>{layer.n}</span></LayerName>
      <LayerName $selected={layer.selected}>
        {layer.audio ? <Icon name="player" size={13} /> : <NullBox $size={13} $color="#fff" />}
        <span>{layer.name}</span>
      </LayerName>
      <Cells>
        <Cell $box><Icon name="shy" size={12} /></Cell>
        <Cell $box={layer.boxes[0]} />
        <Cell $box><Icon name="slash" size={12} /></Cell>
        {layer.boxes.slice(2).map((b, i) => (
          <Cell key={i} $box={b} />
        ))}
      </Cells>
      <Pad $left={5} $gap={6}>
        <Icon name="whip" size={13} />
        <ParentSelect>
          <Select label="Parent" options={["None"]} $bg="#1d1d1d" $color="#b0b0b0" $pad={6} />
        </ParentSelect>
      </Pad>
      <span />
    </LayerGrid>
  );
}

const TracksColumn = styled(Timed)`
  padding-top: 7px;
  border-left: 1px solid #111;
`;

const Track = styled.div`
  height: 17px;
  flex: none;
  padding: 0 7px;
  background: ${(p) => (p.$selected ? "#444" : "#2d2d2d")};
  display: flex;
  div {
    flex: 1;
    margin-bottom: 1px;
    background: ${(p) => (p.$selected ? "linear-gradient(#a9c9c4, #82a8a1)" : "#7b3a3a")};
    border-top: 1px solid ${(p) => (p.$selected ? "#c4dedb" : "#874646")};
    border-radius: ${(p) => (p.$selected ? "4px 4px 0 0" : "0")};
  }
`;

const EmptyTracks = styled.div`
  flex: 1;
  margin: 0 7px;
  background: #303030;
`;

const WorkArea = styled(RangeBar)`
  margin-bottom: 4px;
  span { background: #5e5e5e; }
`;

const SideMarks = styled.div`
  border-left: 1px solid #111;
  padding: 38px 0 0;
  display: flex;
  flex-direction: column;
  align-items: center;
  gap: 7px;
  color: #b4b4b4;
`;

const TimelineFooter = styled.div`
  height: 19px;
  display: grid;
  grid-template-columns: 533px auto 1fr;
  align-items: center;
  background: linear-gradient(#000, #000) 0 0 / 641px 1px no-repeat;
`;

const FootLeft = styled.div`
  display: flex;
  align-items: center;
  padding-left: 3px;
`;

const FootButton = styled.button`
  width: 18px;
  height: 16px;
  display: grid;
  place-items: center;
  color: ${(p) => (p.$on ? "#2d8ceb" : "#b0b0b0")};
  ${(p) => p.$on && css`background: #1c1c1c;`}
`;

const ToggleButton = styled.button`
  margin: 0 134px 0 auto;
  width: 134px;
  height: 16px;
  border: 1px solid #303030;
  border-radius: 3px;
  background: #1f1f1f;
  font-size: 10px;
  line-height: 12px;
`;

const ZoomControl = styled.label`
  display: flex;
  align-items: center;
  gap: 10px;
  padding-left: 5px;
  color: #b0b0b0;
  input {
    appearance: none;
    width: 50px;
    height: 2px;
    background: #454545;
  }
  input::-webkit-slider-thumb {
    appearance: none;
    width: 10px;
    height: 10px;
    border: 2px solid #a0a0a0;
    border-radius: 5px;
    background: #232323;
  }
`;

function Timeline() {
  return (
    <TimelinePanel>
      <TimelineTabs>
        <CloseX aria-label="Close tab">×</CloseX>
        <Swatch $color="#a89274" />
        MVI_9753
        <Icon name="burger" size={13} />
      </TimelineTabs>
      <TimelineBody>
        <div>
          <TimelineHead>
            <Timecode>
              <strong>0;00;12;26</strong>
              <small>00386 (29.97 fps)</small>
            </Timecode>
            <SearchBox $w={227} $margin="5px 0 0">
              <Icon name="searchDrop" size={18} />
              <input aria-label="Search layers" />
            </SearchBox>
            <HeadIcons>
              <HeadIcon $w={16} aria-label="Mini-flowchart"><Icon name="flowDrop" size={17} /></HeadIcon>
              <HeadIcon $w={52} aria-label="Draft 3D"><Icon name="draft3d" size={17} /></HeadIcon>
              <HeadIcon $w={16} aria-label="Hide shy layers"><Icon name="shyBig" size={16} /></HeadIcon>
              <HeadIcon $w={36} aria-label="Frame blending"><Icon name="film" size={15} /></HeadIcon>
              <HeadIcon $w={16} aria-label="Motion blur"><Icon name="blur" size={16} /></HeadIcon>
              <HeadIcon $w={52} aria-label="Graph editor"><Icon name="graph" size={17} /></HeadIcon>
            </HeadIcons>
          </TimelineHead>
          <LayerHeader>
            <Cells $head>
              {["eye", "speaker", "dot", "lock"].map((n) => (
                <Cell key={n}><Icon name={n} size={12} /></Cell>
              ))}
            </Cells>
            <Pad $left={14}><Icon name="tag" size={12} /></Pad>
            <Pad $left={6}>#</Pad>
            <Pad $left={6}>Layer Name</Pad>
            <Cells $head>
              <Cell><Icon name="shy" size={12} /></Cell>
              <Cell><Icon name="sun" size={11} /></Cell>
              <Cell><Icon name="quality" size={11} /></Cell>
              <Cell><Fx>fx</Fx></Cell>
              <Cell><Icon name="film" size={12} /></Cell>
              <Cell><Icon name="blur" size={12} /></Cell>
              <Cell><Icon name="adjust" size={11} /></Cell>
              <Cell><Icon name="cube" size={12} /></Cell>
            </Cells>
            <Pad $left={6}>Parent</Pad>
            <span />
          </LayerHeader>
          {layers.map((l) => (
            <LayerRow key={l.n} layer={l} />
          ))}
        </div>
        <TracksColumn>
          <RangeBar $h={10}><span /></RangeBar>
          <Ruler h={20} />
          <WorkArea $h={16}><span /></WorkArea>
          <Track><div /></Track>
          <Track $selected><div /></Track>
          <EmptyTracks />
          <Cursor top={21} line />
        </TracksColumn>
        <SideMarks>
          <Icon name="marker" size={14} />
          <Icon name="compBtn" size={14} />
        </SideMarks>
      </TimelineBody>
      <TimelineFooter>
        <FootLeft>
          <FootButton $on aria-label="Layer switches"><Icon name="stack" size={12} /></FootButton>
          <FootButton aria-label="Transfer controls"><Icon name="modes" size={12} /></FootButton>
          <FootButton aria-label="In and out"><Icon name="inout" size={12} /></FootButton>
          <ToggleButton>Toggle Switches / Modes</ToggleButton>
        </FootLeft>
        <ZoomControl>
          <Icon name="hillSmall" size={11} />
          <input type="range" defaultValue="2" aria-label="Timeline zoom" />
          <Icon name="hillBig" size={15} />
        </ZoomControl>
      </TimelineFooter>
    </TimelinePanel>
  );
}

/* ---------- taskbar ---------- */

const Bar = styled.footer`
  height: 40px;
  flex: none;
  display: flex;
  background: linear-gradient(90deg, #2e2e2e, #333230 60%, #2e2e2d);
  color: #fff;
`;

const Task = styled.button`
  width: ${(p) => p.$w || 49}px;
  height: 40px;
  flex: none;
  display: grid;
  place-items: center;
  background: ${(p) => (p.$active ? "#474747" : "none")};
  box-shadow: ${(p) => (p.$open ? "inset 0 -2px #b8b5b0" : "none")};
  ${(p) => p.$open && !p.$active && css`
    width: 41px;
    margin: 0 4px;
  `}
`;

const Tray = styled.div`
  margin: 0 12px 0 auto;
  display: flex;
  align-items: center;
`;

const TrayIcon = styled.button`
  width: ${(p) => p.$w || 32}px;
  height: 40px;
  display: grid;
  place-items: center;
  font-size: 13px;
`;

const Clock = styled.time`
  width: 76px;
  margin-right: 4px;
  text-align: center;
  font-size: 12px;
  line-height: 18px;
`;

const ShowDesktop = styled.button`
  width: 5px;
  height: 40px;
  border-left: 1px solid #777;
`;

function OfficeIcon({ letter, color }) {
  return (
    <svg width="22" height="22" viewBox="0 0 22 22">
      <path d="M12 2h10v18H12z" fill="#fff" stroke={color} />
      <path d="M14 5h6M14 8h6M14 11h6M14 14h6M14 17h6" stroke={color} strokeWidth="1.500" />
      <path d="M0 2.500L13 0v22L0 19.500z" fill={color} />
      <text x="6.500" y="16" fill="#fff" fontSize="12" fontWeight="bold" textAnchor="middle">{letter}</text>
    </svg>
  );
}

const logos = {
  chrome: (
    <svg width="22" height="22" viewBox="0 0 22 22">
      <circle cx="11" cy="11" r="11" fill="#f8c63a" />
      <path d="M11 11L1.500 5.500a11 11 0 0 1 19 0z" fill="#dd4b3e" />
      <path d="M1.500 5.500A11 11 0 0 0 10 22l5.500-9L11 11z" fill="#2ea35a" />
      <path d="M11 5.500h9.500a11 11 0 0 1-10.500 16.500l6-9z" fill="#f8c63a" />
      <circle cx="11" cy="11" r="5.500" fill="#fff" />
      <circle cx="11" cy="11" r="4.300" fill="#4a86e8" />
    </svg>
  ),
  foobar: (
    <svg width="18" height="22" viewBox="0 0 18 22">
      <path d="M2 0l3 5q4-2 8 0l3-5q1 4 0 7 1 3 0 6-2 7-7 9-5-2-7-9-1-3 0-6-1-3 0-7z" fill="#fff" />
      <path d="M3 10q5 0 5 6-5-1-5-6zM15 10q-5 0-5 6 5-1 5-6zM7 19h1v1H7zM10 19h1v1h-1z" fill="#222" />
    </svg>
  ),
  explorer: (
    <svg width="22" height="20" viewBox="0 0 22 20">
      <path d="M0 1h8l2 2h12v16H0z" fill="#e8b84b" />
      <path d="M1 5h20v14H1z" fill="#fbe08f" />
      <path d="M4 11h14v8h-4v-4H8v4H4z" fill="#3cabdf" />
    </svg>
  ),
  firefox: (
    <svg width="23" height="23" viewBox="0 0 23 23">
      <circle cx="12" cy="11" r="9.500" fill="#2a55c8" />
      <path d="M1 12q0-6 3-9l2 4q2-2 5-1-3 2 0 4l3 1-3 2q0 4 4 3 4-1 5-5 2 8-5 11Q3 23 1 12z" fill="#ff8a1a" />
      <path d="M14 2q8 4 8 11-2 8-10 8.500 7-3 7-9 0-6-5-10.500z" fill="#ffcf3d" />
      <path d="M1 12q0 9 9 10.500 4 0 6-2-6 0-9-4-3-5-2-9z" fill="#e8422b" />
    </svg>
  ),
  note: (
    <svg width="18" height="20" viewBox="0 0 18 20">
      <path d="M0 1h18v12l-7 6H0z" fill="#f4e79a" />
      <path d="M18 12l-8 8v-8z" fill="#6b6540" />
    </svg>
  ),
  messenger: (
    <svg width="24" height="24" viewBox="0 0 24 24">
      <path d="M0 0h24v24H0z" fill="#0084ff" />
      <path d="M12 6c7 0 7.500 10 0 10.500h-2L7 18v-3C4 11 7 6 12 6z" fill="#fff" />
      <path d="M8 13l3-3 2 2 3-2-3 3.500-2-2z" fill="#0084ff" />
    </svg>
  ),
  line: (
    <svg width="24" height="24" viewBox="0 0 24 24">
      <rect width="24" height="24" rx="5" fill="#00b900" />
      <path d="M12 4c11 0 11 9 5 13l-5 4v-3C0 17 1 4 12 4z" fill="#fff" />
      <text x="12" y="13" fill="#00b900" fontSize="6" fontWeight="bold" textAnchor="middle">LINE</text>
    </svg>
  ),
  paint: (
    <svg width="24" height="24" viewBox="0 0 24 24">
      <path d="M10 3q10-1 12 7 1 10-10 12-5 0-4-4 0-3-3-3-4 0-4-4 1-7 9-8z" fill="#bcd9ec" />
      <circle cx="5" cy="11" r="2" fill="#d8402f" />
      <circle cx="8" cy="7" r="2" fill="#f0b428" />
      <circle cx="14" cy="6" r="2" fill="#4aa84a" />
      <circle cx="18" cy="17" r="2.200" fill="#2d7fd0" />
      <path d="M20 0l3 2-2 5-7 17-1-1 5-17z" fill="#d79a4c" />
    </svg>
  ),
};

const trayIcons = [
  ["Creative Cloud", <path d="M13 5a4 4 0 1 1-2 7L8 9a2 2 0 1 0-1 3M6 13a4 4 0 1 1 3-6l2 2a2 2 0 1 0 2-1" fill="none" stroke="#fff" strokeWidth="1.500" />],
  ["OneDrive", <path d="M1 14q-1-4 3-4 1-5 6-4 4-2 5 3 3 1 2 4 0 1-2 1z" fill="#0b78d4" />],
  ["Graphics", <g><path d="M0 1h18v16H0z" fill="#1d5f96" /><path d="M3 5h12v8H3z" fill="#e8f2fa" /><path d="M6 7h6M9 7v4M6 11h6" fill="none" stroke="#1d5f96" strokeWidth="1.500" /></g>],
  ["TeamViewer", <g><rect x="1" y="1" width="16" height="16" rx="2" fill="#0d6fd8" /><circle cx="9" cy="9" r="7" fill="#fff" /><path d="M3 9l4-3v2h4V6l4 3-4 3v-2H7v2z" fill="#0d6fd8" /></g>],
  ["LINE", <g><rect x="1" y="1" width="16" height="16" rx="2" fill="#00c300" /><path d="M9 3c9 0 8 7 3 10l-3 3v-3C0 12 1 3 9 3z" fill="#fff" /></g>],
  ["Google Drive", <g><rect x="1" y="1" width="16" height="16" rx="1" fill="#fff" /><path d="M7 3h4l5 8-2 4H4l-2-4zM9 8l-2 3h4z" fill="#333" fillRule="evenodd" /></g>],
  ["Groove", <g><circle cx="9" cy="9" r="8" fill="#1ba8e8" /><circle cx="9" cy="9" r="4.500" fill="#fff" /><circle cx="10" cy="8" r="1.600" fill="#1ba8e8" /></g>],
  ["Battery", <g fill="none" stroke="#fff" strokeWidth="1.300"><path d="M7 5h9v8H5M16 8h2v2h-2M2 3v3M5 3v3M1 6h5v3H1zM3.500 9v4" /><path d="M8 7h6v4H8z" fill="#fff" /></g>],
  ["Network", <g fill="none" stroke="#fff"><path d="M3 15A12 12 0 0 1 15 3M6 16a9 9 0 0 1 9-9M9 16a6 6 0 0 1 6-6" /><circle cx="14" cy="15" r="1.500" fill="#fff" /></g>],
  ["Volume", <g fill="none" stroke="#fff"><path d="M0 7h3l4-4v12l-4-4H0zM9 7q1.500 2 0 4M11 5q3 4 0 8" /><path d="M13 3q5 6 0 12" stroke="#888" /></g>],
  ["Ink Workspace", <path d="M6 14q-3 4-5 1-1-4 5-4l8-9q2-1 3 1L8 14q-3 2-3-2l6-6M9 13q3 2 5-1l2-2" fill="none" stroke="#fff" strokeWidth="1.400" />],
];

function TaskBar() {
  return (
    <Bar>
      <Task $w={50} aria-label="Start"><FaWindows size={17} /></Task>
      <Task aria-label="Edge"><FaEdgeLegacy size={21} color="#0b78d4" /></Task>
      <Task aria-label="Chrome">{logos.chrome}</Task>
      <Task aria-label="foobar2000">{logos.foobar}</Task>
      <Task $open aria-label="File Explorer">{logos.explorer}</Task>
      <Task $open aria-label="Firefox">{logos.firefox}</Task>
      <Task aria-label="OneNote"><OfficeIcon letter="N" color="#80397b" /></Task>
      <Task aria-label="Word"><OfficeIcon letter="W" color="#2a5699" /></Task>
      <Task aria-label="Excel"><OfficeIcon letter="X" color="#207245" /></Task>
      <Task $open aria-label="Sticky Notes">{logos.note}</Task>
      <Task aria-label="Messenger">{logos.messenger}</Task>
      <Task aria-label="LINE">{logos.line}</Task>
      <Task $open $active aria-label="After Effects"><AeBadge $size={22}>Ae</AeBadge></Task>
      <Task $open aria-label="Paint">{logos.paint}</Task>
      <Tray>
        {trayIcons.map(([name, art]) => (
          <TrayIcon key={name} aria-label={name}>
            <svg width="16" height="16" viewBox="0 0 18 18">{art}</svg>
          </TrayIcon>
        ))}
        <TrayIcon>中</TrayIcon>
        <TrayIcon $w={28} aria-label="Bopomofo">
          <svg width="14" height="15"><path d="M0 0h14v15H0z" fill="#fff" /><path d="M5 3L4 6h6v5l-3 1" fill="none" stroke="#222" strokeWidth="1.500" /></svg>
        </TrayIcon>
        <Clock>15:03<br />2018/2/11</Clock>
        <TrayIcon aria-label="Notifications">
          <svg width="17" height="17" fill="none" stroke="#fff"><path d="M.5 1.500h15v11h-5l-2.500 3-2.500-3h-5z" /></svg>
        </TrayIcon>
      </Tray>
      <ShowDesktop aria-label="Show desktop" />
    </Bar>
  );
}

/* ---------- motion target dialog ---------- */

const Overlay = styled.div`
  position: fixed;
  inset: 0 0 46px;
  display: grid;
  place-items: center;
`;

const DialogBox = styled.div`
  width: 402px;
  border: 1px solid #6b6b6b;
  background: #232323;
  box-shadow: 0 3px 14px rgba(0, 0, 0, 0.6);
`;

const DialogTitle = styled.div`
  height: 32px;
  background: #fff;
  color: #111;
  display: flex;
  align-items: center;
  justify-content: space-between;
  padding: 0 12px 2px 8px;
  font-size: 15px;
`;

const DialogBody = styled.form`
  padding: 15px;
`;

const Group = styled.fieldset`
  margin: 0;
  border: 1px solid #303030;
  border-radius: 3px;
  padding: 10px 18px 18px 19px;
  min-width: 0;
  legend {
    margin-left: -16px;
    padding: 0 12px 0 5px;
    color: #8f8f8f;
  }
`;

const RadioRow = styled.div`
  display: grid;
  grid-template-columns: 130px 200px;
  align-items: center;
  height: 20px;
  white-space: nowrap;
  & + & { margin-top: 7px; }
`;

const RadioLabel = styled.label`
  display: flex;
  align-items: center;
  gap: 3px;
  color: ${(p) => (p.$off ? "#464646" : "#8f8f8f")};
  input {
    appearance: none;
    width: 13px;
    height: 13px;
    border: 2px solid #464646;
    border-radius: 50%;
  }
  input:checked { background: #969696; border-color: #969696; }
`;

const Popup = styled.ul`
  position: absolute;
  top: 100%;
  left: -1px;
  width: 210px;
  margin: 0;
  padding: 3px 2px 2px;
  list-style: none;
  background: #f1f1f1;
  border: 1px solid #ccc;
  box-shadow: 4px 4px 3px rgba(0, 0, 0, 0.6);
  font-size: 14px;
  line-height: 22px;
`;

const PopupItem = styled.li`
  display: flex;
  gap: 10px;
  color: ${(p) => (p.$dim ? "#777" : "#111")};
  &::before {
    content: "${(p) => (p.$picked ? "●" : "")}";
    width: 22px;
    text-align: center;
    font-size: 8px;
    color: #333;
    background: ${(p) => (p.$picked ? "#91c9f7" : "none")};
  }
`;

const DialogButtons = styled.div`
  display: flex;
  justify-content: flex-end;
  gap: 10px;
  margin-top: 20px;
`;

const DialogButton = styled.button`
  width: 90px;
  height: 20px;
  border: 1px solid ${(p) => (p.$primary ? "#c8c8c8" : "#6b6b6b")};
  border-radius: 10px;
  color: ${(p) => (p.$primary ? "#e0e0e0" : "#8f8f8f")};
  line-height: 16px;
`;

function MotionTarget() {
  const [mode, setMode] = useState("layer");
  return (
    <Overlay>
      <DialogBox role="dialog" aria-label="Motion Target">
        <DialogTitle>
          Motion Target
          <button aria-label="Close">
            <svg width="12" height="12" stroke="#111"><path d="M1 1l10 10M11 1L1 11" /></svg>
          </button>
        </DialogTitle>
        <DialogBody onSubmit={(e) => e.preventDefault()}>
          <Group>
            <legend>Apply Motion To:</legend>
            <RadioRow>
              <RadioLabel>
                <input type="radio" name="mode" checked={mode === "layer"} onChange={() => setMode("layer")} />
                Layer:
              </RadioLabel>
              <Select label="Layer" options={["1. Null 2", "2. MVI_9753.MOV"]} $focus $bg="#1d1d1d" $color="#c8c8c8" $pad={6}>
                <Popup>
                  <PopupItem $picked>1. Null 2</PopupItem>
                  <PopupItem $dim>2. MVI_9753.MOV</PopupItem>
                </Popup>
              </Select>
            </RadioRow>
            <RadioRow>
              <RadioLabel $off>
                <input type="radio" name="mode" checked={mode === "effect"} onChange={() => setMode("effect")} />
                Effect point control:
              </RadioLabel>
            </RadioRow>
          </Group>
          <DialogButtons>
            <DialogButton $primary>OK</DialogButton>
            <DialogButton type="button">Cancel</DialogButton>
          </DialogButtons>
        </DialogBody>
      </DialogBox>
    </Overlay>
  );
}

export default function App() {
  return (
    <Window>
      <GlobalStyle />
      <WindowChrome />
      <Tools />
      <Workspace>
        <Project />
        <Viewer />
        <Side />
      </Workspace>
      <Timeline />
      <TaskBar />
      <MotionTarget />
    </Window>
  );
}
